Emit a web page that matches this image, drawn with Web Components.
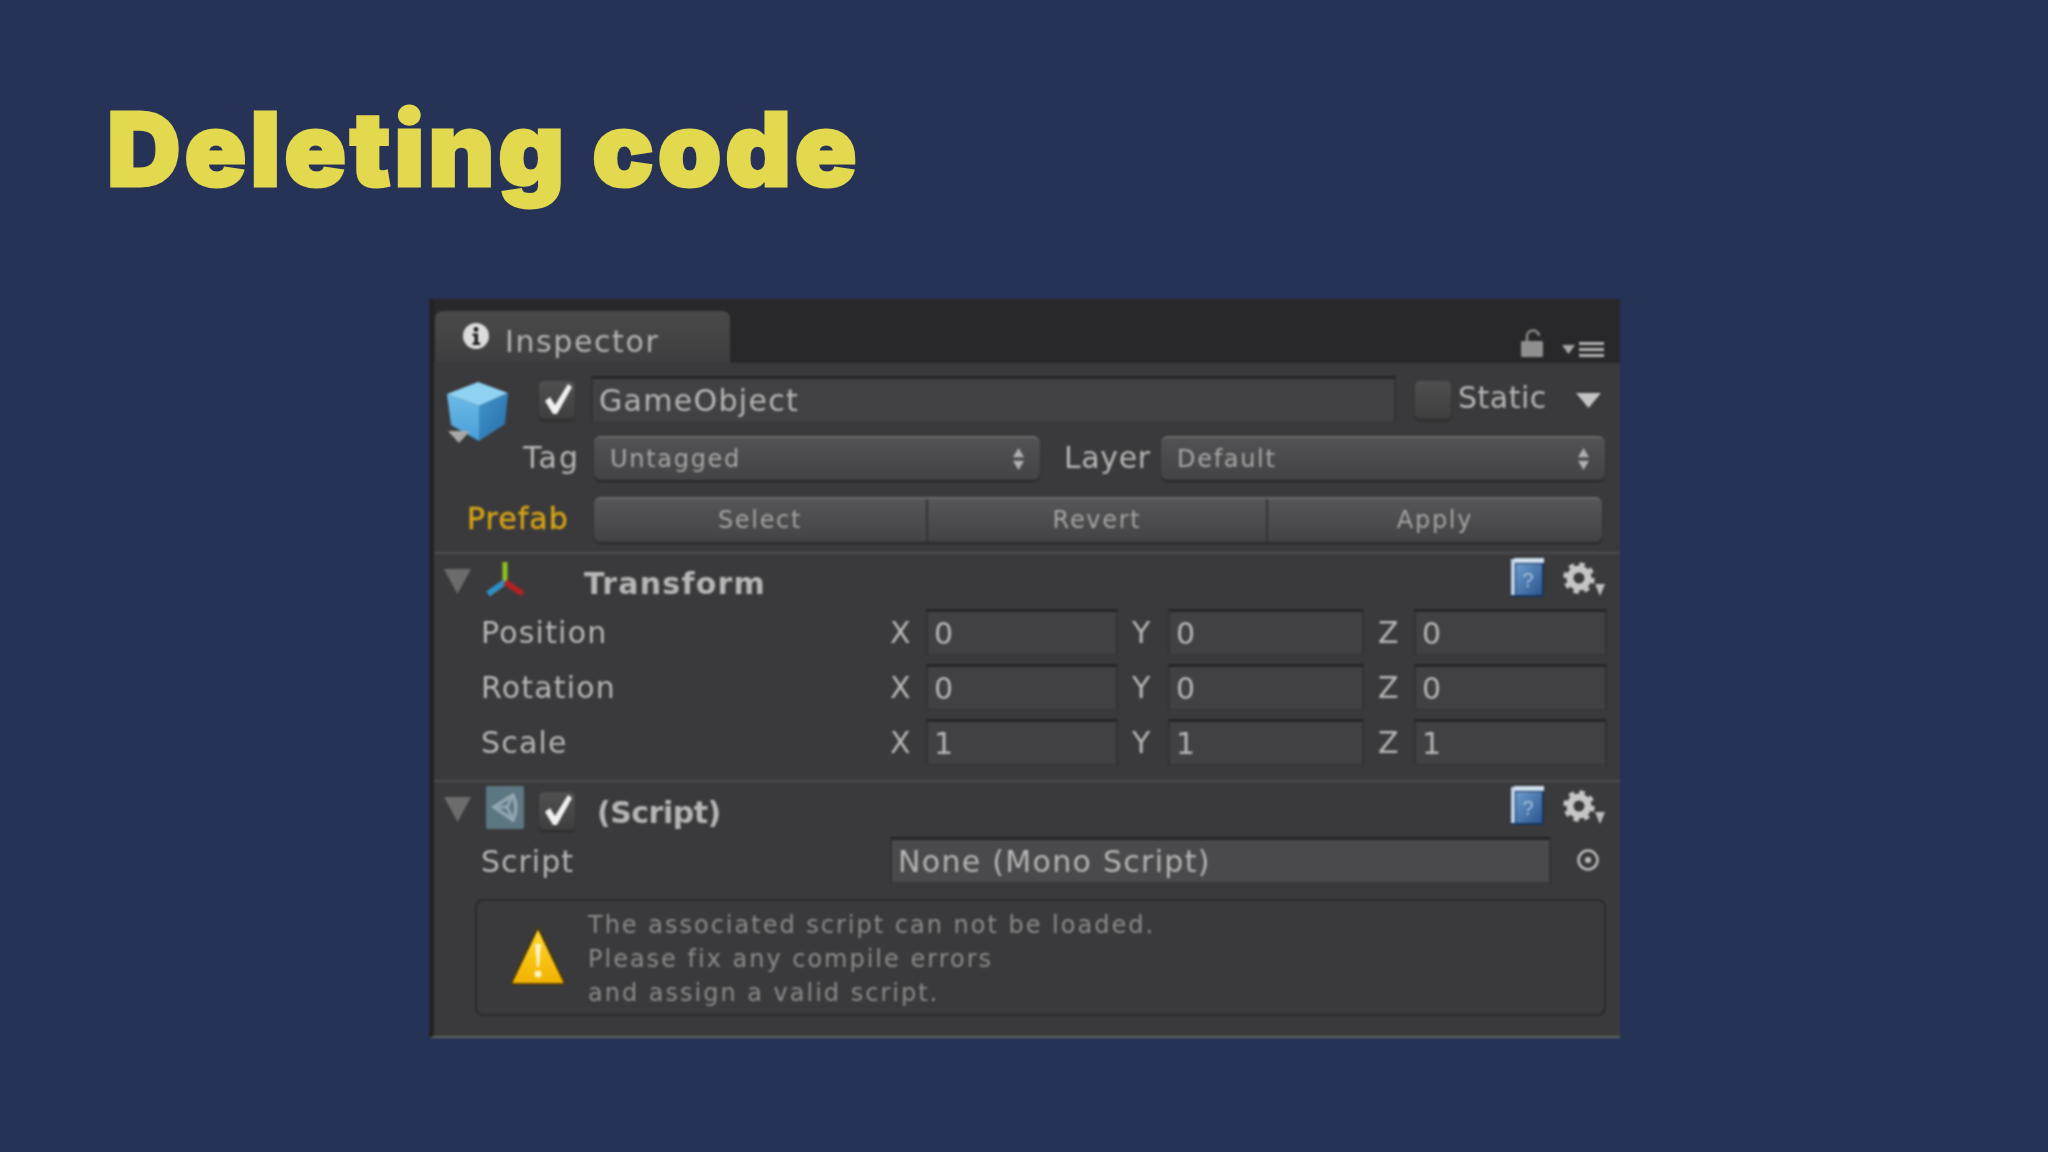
<!DOCTYPE html>
<html>
<head>
<meta charset="utf-8">
<title>Deleting code</title>
<style>
    html, body{ margin: 0; padding: 0; background: #263357; }
</style>
</head>
<body>
<slide-page>
    <span slot="title">Deleting code</span>
    <u-inspector>
        <u-tabbar>Inspector</u-tabbar>

        <u-row h="73" top="13" left="12">
            <u-icon name="cube" w="63" h="60" style="margin-top:5px"></u-icon>
            <u-check checked style="margin:5px 0 0 30px"></u-check>
            <u-field w="805" h="47" style="margin-left:16px">GameObject</u-field>
            <u-check style="margin:5px 0 0 19px"></u-check>
            <u-label style="margin-left:7px;width:118px;letter-spacing:0.5px">Static</u-label>
            <u-icon name="tri" w="25" h="15" style="margin-top:17px"></u-icon>
        </u-row>

        <u-row h="61">
            <u-label style="width:146px;text-align:right;letter-spacing:2px">Tag</u-label>
            <u-dropdown w="446" style="margin-left:14px">Untagged</u-dropdown>
            <u-label style="margin-left:24px;width:97px;letter-spacing:0.6px">Layer</u-label>
            <u-dropdown w="444">Default</u-dropdown>
        </u-row>

        <u-row h="55" left="33">
            <u-label color="#d9a514" style="width:127px;-webkit-text-stroke:0.4px #d9a514">Prefab</u-label>
            <u-btn-group>
                <span>Select</span><span>Revert</span><span>Apply</span>
            </u-btn-group>
        </u-row>

        <u-section style="padding-bottom:6px">
            <u-sec-head h="55">
                <u-icon slot="icon" name="axes" w="40" h="36" style="margin:-5px 0 0 14px"></u-icon>
                <span slot="title" style="margin:3px 0 0 59px;font-weight:700;letter-spacing:1.2px">Transform</span>
            </u-sec-head>
            <u-vec-row label="Position" x="0" y="0" z="0"></u-vec-row>
            <u-vec-row label="Rotation" x="0" y="0" z="0"></u-vec-row>
            <u-vec-row label="Scale" x="1" y="1" z="1"></u-vec-row>
        </u-section>

        <u-section>
            <u-sec-head h="55">
                <u-icon slot="icon" name="unity" w="38" h="43" style="margin:-4px 0 0 15px"></u-icon>
                <u-check slot="icon" checked style="margin:2px 0 0 15px"></u-check>
                <span slot="title" style="margin:6px 0 0 22px;font-weight:700;letter-spacing:-0.5px">(Script)</span>
            </u-sec-head>
            <u-row h="53" left="47">
                <u-label style="width:409px;padding-top:3px">Script</u-label>
                <u-field w="661" h="46" bg="#4a494b">None (Mono Script)</u-field>
                <u-icon name="target" w="24" h="24" style="margin:11px 0 0 25px"></u-icon>
            </u-row>
            <u-helpbox>
                The associated script can not be loaded.<br>
                Please fix any compile errors<br>
                and assign a valid script.
            </u-helpbox>
        </u-section>
    </u-inspector>
</slide-page>

<script>
const FONT = `"DejaVu Sans", "Liberation Sans", sans-serif`

const ICONS = {
    info: `<svg viewBox="0 0 28 28" width="100%" height="100%"><circle cx="14" cy="14" r="13" fill="#dcdcdc"/><circle cx="14" cy="7.5" r="2.4" fill="#1c1c1c"/><path d="M10.5 11.5h5.5v9h2.2v2.5h-7.7v-2.5h2v-6.5h-2z" fill="#1c1c1c"/></svg>`,
    cube: `<svg viewBox="0 0 63 60" width="100%" height="100%">
        <defs>
            <linearGradient id="cr" x1="0" y1="0" x2="1" y2="1"><stop offset="0" stop-color="#3f93cc"/><stop offset="1" stop-color="#2a6ea8"/></linearGradient>
            <linearGradient id="cl" x1="0" y1="0" x2="0" y2="1"><stop offset="0" stop-color="#6cbbe8"/><stop offset="1" stop-color="#4a9ed8"/></linearGradient>
        </defs>
        <path d="M1 13L32 1 62 12 33 25z" fill="#8fd2f2"/>
        <path d="M1 13L33 25 33 60 5 44z" fill="url(#cl)"/>
        <path d="M33 25L62 12 59 43 33 60z" fill="url(#cr)"/>
        <path d="M2 50H24L13 62z" fill="#a8a8a8"/>
    </svg>`,
    tri: `<svg viewBox="0 0 25 15" width="100%" height="100%"><path d="M0 0H25L12.5 15z" fill="#c4c4c4"/></svg>`,
    fold: `<svg viewBox="0 0 27 25" width="100%" height="100%"><path d="M0 0H27L13.5 25z" fill="#6c6c6c"/></svg>`,
    axes: `<svg viewBox="0 0 40 36" width="100%" height="100%">
        <path d="M20 1V21" stroke="#8fc21f" stroke-width="5" fill="none"/>
        <path d="M20 21L3 33" stroke="#2f8fc4" stroke-width="6" fill="none"/>
        <path d="M20 21L38 33" stroke="#b32222" stroke-width="6" fill="none"/>
    </svg>`,
    unity: `<svg viewBox="0 0 38 43" width="100%" height="100%">
        <rect x="0" y="0" width="38" height="43" rx="2" fill="#5c7682"/>
        <path d="M27 9L8 21 27 34C31 25 31 17 27 9z" fill="none" stroke="#93a7af" stroke-width="3.500"/>
        <path d="M9 21H20M27 9L21 21 27 34" fill="none" stroke="#93a7af" stroke-width="3"/>
    </svg>`,
    book: `<svg viewBox="0 0 35 40" width="100%" height="100%">
        <defs><linearGradient id="bk" x1="0" y1="0" x2="1" y2="1"><stop offset="0" stop-color="#6d9bcb"/><stop offset="1" stop-color="#2a5590"/></linearGradient></defs>
        <rect x="1" y="2" width="33" height="37" rx="2" fill="#16345e"/>
        <rect x="4" y="0" width="30" height="5" fill="#cfdfee"/>
        <rect x="1" y="1" width="4" height="36" fill="#bcd3ea"/>
        <rect x="6" y="6" width="26" height="31" fill="url(#bk)"/>
        <text x="18" y="29" font-family="Liberation Sans" font-size="20" fill="#a9c3de" text-anchor="middle">?</text>
    </svg>`,
    gear: `<svg viewBox="0 0 42 34" width="100%" height="100%">
        <circle cx="16" cy="16" r="9" fill="none" stroke="#c6c6c6" stroke-width="7"/>
        <circle cx="16" cy="16" r="13.500" fill="none" stroke="#c6c6c6" stroke-width="4.500" stroke-dasharray="5.300 5.300"/>
        <path d="M32 22H42L37 34z" fill="#bdbdbd"/>
    </svg>`,
    target: `<svg viewBox="0 0 24 24" width="100%" height="100%"><circle cx="12" cy="12" r="9.5" fill="none" stroke="#bdbdbd" stroke-width="2.5"/><circle cx="12" cy="12" r="3" fill="#bdbdbd"/></svg>`,
    warn: `<svg viewBox="0 0 54 58" width="100%" height="100%">
        <defs><linearGradient id="wg" x1="0" y1="0" x2="0" y2="1"><stop offset="0" stop-color="#ffd92e"/><stop offset="1" stop-color="#f2b100"/></linearGradient></defs>
        <path d="M27 1L53 55Q53.500 57 51 57H3Q0.500 57 1 55z" fill="url(#wg)" stroke="#4a3500" stroke-width="1.500"/>
        <path d="M24 17H30L28 40H26z" fill="#fff3c4"/>
        <circle cx="27" cy="47" r="3.500" fill="#fff3c4"/>
    </svg>`,
    lock: `<svg viewBox="0 0 22 28" width="100%" height="100%"><path d="M6 12V7a6 5.500 0 0 1 12 0" fill="none" stroke="#8a8a8a" stroke-width="2.500"/><rect x="0" y="12" width="22" height="16" rx="1.500" fill="#8f8f8f"/></svg>`,
    menu: `<svg viewBox="0 0 42 15" width="100%" height="100%"><path d="M0 3H13L6.500 12z" fill="#a8a8a8"/><path d="M17 1.500H42M17 7.500H42M17 13.500H42" stroke="#b2b2b2" stroke-width="3"/></svg>`,
    updown: `<svg viewBox="0 0 12 24" width="100%" height="100%"><path d="M6 0L12 10H0zM6 24L0 14H12z" fill="#b0b0b0"/></svg>`
}

class SlidePage extends HTMLElement{
    constructor(){
        super()
        this.attachShadow({mode:"open"}).innerHTML = `
        <style>
            :host{
                display: block;
                width: 2048px;
                height: 1152px;
                background: #263357;
                overflow: hidden;
            }
            #title{
                height: 299px;
                box-sizing: border-box;
                padding: 88px 0 0 107px;
                font: 900 102px/1.2 "Inter", "Lato", sans-serif;
                color: #e3d94f;
                -webkit-text-stroke: 3px #e3d94f;
                letter-spacing: 3.8px;
                filter: blur(0.4px);
            }
            #body{ padding-left: 429px; }
        </style>
        <div id="title"><slot name="title"></slot></div>
        <div id="body"><slot></slot></div>`
    }
}

class UInspector extends HTMLElement{
    constructor(){
        super()
        this.attachShadow({mode:"open"}).innerHTML = `
        <style>
            :host{
                display: block;
                width: 1191px;
                height: 739px;
                box-sizing: border-box;
                background: #3a3a3c;
                border-left: 5px solid #232325;
                border-bottom: 2px solid #5c6a60;
                color: #b6b6b6;
                font-family: ${FONT};
                filter: blur(0.9px);
            }
        </style>
        <slot></slot>`
    }
}

class UTabbar extends HTMLElement{
    constructor(){
        super()
        this.attachShadow({mode:"open"}).innerHTML = `
        <style>
            :host{
                display: flex;
                align-items: flex-end;
                height: 64px;
                background: #28282a;
            }
            #tab{
                display: flex;
                align-items: center;
                width: 295px;
                height: 52px;
                margin-left: 1px;
                box-sizing: border-box;
                padding: 0 0 0 27px;
                background: linear-gradient(#4a4a4a, #3e3e40);
                border-radius: 8px 8px 0 0;
                font-size: 30px;
                letter-spacing: 1.6px;
                color: #b4b4b4;
            }
            #tab span{ margin-left: 15px; padding-top: 8px; }
            #tools{
                margin-left: auto;
                display: flex;
                align-items: flex-end;
                padding: 0 16px 6px 0;
            }
        </style>
        <div id="tab">
            <u-icon name="info" w="28" h="28" style="margin-top:-3px"></u-icon>
            <span><slot></slot></span>
        </div>
        <div id="tools">
            <u-icon name="lock" w="22" h="28"></u-icon>
            <u-icon name="menu" w="42" h="15" style="margin-left:19px"></u-icon>
        </div>`
    }
}

class UIcon extends HTMLElement{
    constructor(){
        super()
        this.attachShadow({mode:"open"})
    }

    connectedCallback(){
        this.shadowRoot.innerHTML = `
        <style>
            :host{
                display: inline-block;
                flex: none;
                width: ${this.getAttribute('w')}px;
                height: ${this.getAttribute('h')}px;
            }
            svg{ display: block; overflow: visible; }
        </style>
        ${ICONS[this.getAttribute('name')]}`
    }
}

class URow extends HTMLElement{
    constructor(){
        super()
        this.attachShadow({mode:"open"})
    }

    connectedCallback(){
        this.shadowRoot.innerHTML = `
        <style>
            :host{
                display: flex;
                box-sizing: border-box;
                align-items: flex-start;
                height: ${this.getAttribute('h')}px;
                padding-top: ${this.getAttribute('top') || 0}px;
                padding-left: ${this.getAttribute('left') || 0}px;
            }
        </style>
        <slot></slot>`
    }
}

class ULabel extends HTMLElement{
    constructor(){
        super()
        this.attachShadow({mode:"open"})
    }

    connectedCallback(){
        this.shadowRoot.innerHTML = `
        <style>
            :host{
                display: block;
                flex: none;
                box-sizing: border-box;
                font-size: 30px;
                line-height: 44px;
                letter-spacing: 1px;
                color: ${this.getAttribute('color') || '#b6b6b6'};
            }
        </style>
        <slot></slot>`
    }
}

class UCheck extends HTMLElement{
    constructor(){
        super()
        this.attachShadow({mode:"open"})
    }

    connectedCallback(){
        let tick = this.hasAttribute('checked') ? `
            <svg viewBox="0 0 36 38" width="36" height="38"><path d="M6 20L11 16 16 24 29 3 33 6 18 33H14z" fill="#f0f0f0"/></svg>` : ''
        this.shadowRoot.innerHTML = `
        <style>
            :host{
                display: block;
                flex: none;
                width: 36px;
                height: 38px;
                border-radius: 5px;
                background: linear-gradient(#505050, #3e3e3e);
                box-shadow: 0 2px 2px #2a2a2a;
            }
            svg{ display: block; }
        </style>
        ${tick}`
    }
}

class UField extends HTMLElement{
    constructor(){
        super()
        this.attachShadow({mode:"open"})
    }

    connectedCallback(){
        this.shadowRoot.innerHTML = `
        <style>
            :host{
                display: flex;
                flex: none;
                align-items: center;
                box-sizing: border-box;
                width: ${this.getAttribute('w')}px;
                height: ${this.getAttribute('h')}px;
                padding: 0 0 0 6px;
                background: ${this.getAttribute('bg') || '#414143'};
                border-top: 3px solid #252527;
                border-left: 2px solid #323234;
                border-right: 2px solid #323234;
                border-bottom: 1px solid #353537;
                font-size: 30px;
                letter-spacing: 1.3px;
                color: #b6b6b6;
            }
        </style>
        <slot></slot>`
    }
}

class UDropdown extends HTMLElement{
    constructor(){
        super()
        this.attachShadow({mode:"open"})
    }

    connectedCallback(){
        this.shadowRoot.innerHTML = `
        <style>
            :host{
                display: flex;
                flex: none;
                align-items: center;
                justify-content: space-between;
                box-sizing: border-box;
                width: ${this.getAttribute('w')}px;
                height: 44px;
                padding: 0 16px;
                border-radius: 7px;
                border-top: 2px solid #6a6a6a;
                background: linear-gradient(#525254, #434345);
                box-shadow: 0 2px 2px #28282a;
                font-size: 24px;
                letter-spacing: 1.7px;
                color: #a8a8a8;
            }
        </style>
        <span><slot></slot></span>
        <u-icon name="updown" w="11" h="22"></u-icon>`
    }
}

class UBtnGroup extends HTMLElement{
    constructor(){
        super()
        this.attachShadow({mode:"open"}).innerHTML = `
        <style>
            :host{
                display: grid;
                grid-template-columns: 332px 340px 336px;
                box-sizing: border-box;
                width: 1008px;
                height: 45px;
                border-radius: 7px;
                border-top: 2px solid #6a6a6a;
                background: linear-gradient(#565658, #434345);
                box-shadow: 0 2px 2px #28282a;
                font-size: 24px;
                letter-spacing: 1.7px;
                color: #a4a4a4;
            }
            ::slotted(span){
                display: flex;
                align-items: center;
                justify-content: center;
                padding-bottom: 2px;
                border-left: 2px solid #343436;
            }
            ::slotted(span:first-child){ border-left: 0; }
        </style>
        <slot></slot>`
    }
}

class USection extends HTMLElement{
    constructor(){
        super()
        this.attachShadow({mode:"open"}).innerHTML = `
        <style>
            :host{
                display: block;
                border-top: 2px solid #4d4d4f;
            }
        </style>
        <slot></slot>`
    }
}

class USecHead extends HTMLElement{
    constructor(){
        super()
        this.attachShadow({mode:"open"})
    }

    connectedCallback(){
        this.shadowRoot.innerHTML = `
        <style>
            :host{
                display: flex;
                box-sizing: border-box;
                align-items: center;
                height: ${this.getAttribute('h')}px;
                padding: 0 15px 0 10px;
                font-size: 30px;
                color: #b6b6b6;
            }
            #right{ margin-left: auto; display: flex; align-items: center; }
        </style>
        <u-icon name="fold" w="27" h="25"></u-icon>
        <slot name="icon"></slot>
        <slot name="title"></slot>
        <div id="right">
            <u-icon name="book" w="37" h="40" style="margin-top:-7px"></u-icon>
            <u-icon name="gear" w="42" h="34" style="margin:-6px 0 0 17px"></u-icon>
        </div>`
    }
}

class UVecRow extends HTMLElement{
    constructor(){
        super()
        this.attachShadow({mode:"open"})
    }

    connectedCallback(){
        let cell = (axis, value, w, cls) => `
            <span class="axis ${cls}">${axis}</span>
            <u-field w="${w}" h="46">${value}</u-field>`

        this.shadowRoot.innerHTML = `
        <style>
            :host{
                display: grid;
                grid-template-columns: 409px 36px 192px 50px 196px 50px 193px;
                align-items: start;
                height: 55px;
                padding-left: 47px;
                font-size: 30px;
                letter-spacing: 1.2px;
                color: #b6b6b6;
            }
            .axis{ line-height: 46px; padding-top: 1px; }
            .gap{ padding-left: 14px; }
            #label{ line-height: 46px; padding-top: 1px; }
        </style>
        <span id="label">${this.getAttribute('label')}</span>
        ${cell('X', this.getAttribute('x'), 192, '')}
        ${cell('Y', this.getAttribute('y'), 196, 'gap')}
        ${cell('Z', this.getAttribute('z'), 193, 'gap')}`
    }
}

class UHelpbox extends HTMLElement{
    constructor(){
        super()
        this.attachShadow({mode:"open"}).innerHTML = `
        <style>
            :host{
                display: flex;
                align-items: center;
                box-sizing: border-box;
                width: 1131px;
                height: 117px;
                margin: 9px 0 0 41px;
                padding-left: 33px;
                border: 2px solid #2a2a2c;
                border-radius: 8px;
                font-size: 24px;
                line-height: 34px;
                letter-spacing: 2px;
                color: #8c8c8c;
            }
            #text{ margin: 2px 0 0 22px; }
        </style>
        <u-icon name="warn" w="56" h="58" style="margin-top:-4px"></u-icon>
        <div id="text"><slot></slot></div>`
    }
}

customElements.define('u-icon', UIcon)
customElements.define('u-row', URow)
customElements.define('u-label', ULabel)
customElements.define('u-check', UCheck)
customElements.define('u-field', UField)
customElements.define('u-dropdown', UDropdown)
customElements.define('u-btn-group', UBtnGroup)
customElements.define('u-section', USection)
customElements.define('u-sec-head', USecHead)
customElements.define('u-vec-row', UVecRow)
customElements.define('u-helpbox', UHelpbox)
customElements.define('u-tabbar', UTabbar)
customElements.define('u-inspector', UInspector)
customElements.define('slide-page', SlidePage)
</script>
</body>
</html>
